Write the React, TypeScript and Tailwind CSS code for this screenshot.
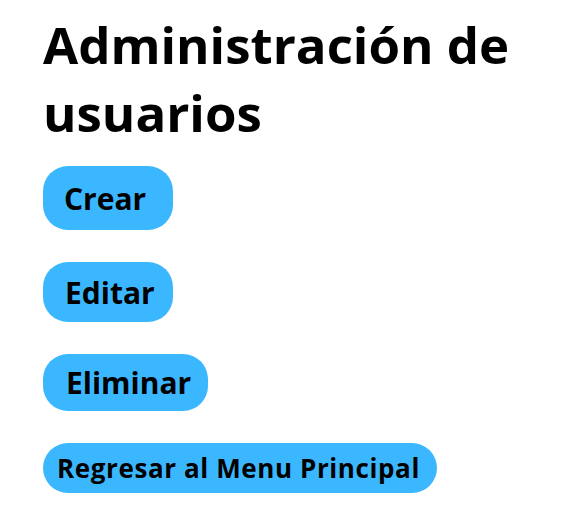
import React from 'react';

const App: React.FC = () => {
  return (
    <div className="min-h-screen bg-white pl-[43px] pt-[10px]" style={{ fontFamily: '"Open Sans", "Liberation Sans", sans-serif' }}>
      <h1 className="text-[51px] leading-[68px] font-bold text-black">Administración de usuarios</h1>
      <div className="mt-[20px] flex flex-col items-start gap-[32px]">
        <button className="h-[64px] w-[130px] rounded-[25px] bg-[#3bb7ff] pl-[21px] text-left text-[30px] font-bold text-black">
          Crear
        </button>
        <button className="h-[60px] w-[130px] rounded-[25px] bg-[#3bb7ff] pl-[22px] text-left text-[30px] font-bold text-black">
          Editar
        </button>
        <button className="h-[57px] w-[165px] rounded-[25px] bg-[#3bb7ff] pl-[23px] text-left text-[30px] font-bold text-black">
          Eliminar
        </button>
        <button className="h-[50px] w-[394px] rounded-[25px] bg-[#3bb7ff] pl-[14px] text-left text-[26px] font-bold tracking-[0.6px] text-black">
          Regresar al Menu Principal
        </button>
      </div>
    </div>
  );
};

export default App;
